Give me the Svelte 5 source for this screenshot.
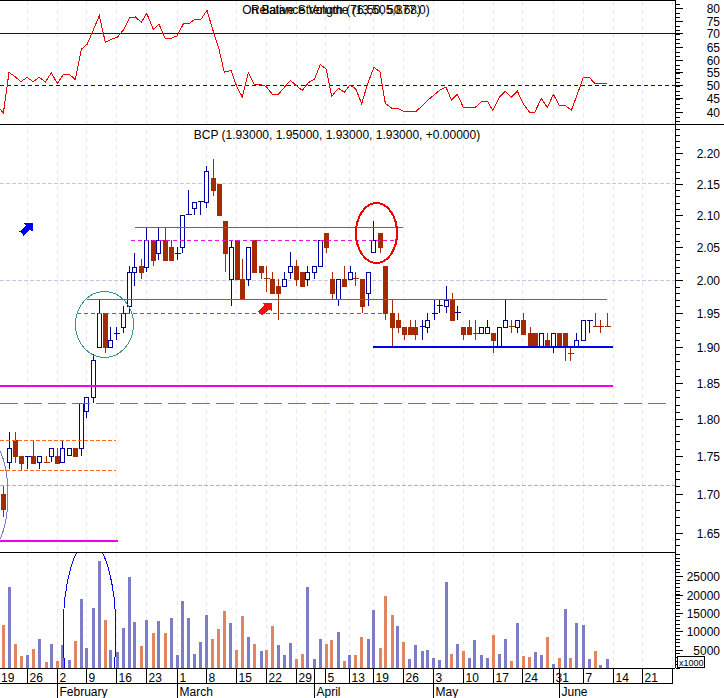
<script>
  // week starts, shared by the grid and the date row
  const weeks = [
    [27.5, '26'], [57.5, '2'], [86.5, '9'], [116.5, '16'], [146.5, '23'], [177.5, '1'], [206.5, '8'],
    [236.5, '15'], [266.5, '22'], [296.5, '29'], [325.5, '5'], [349.5, '13'], [373.5, '19'], [403.5, '26'],
    [433.5, '3'], [463.5, '10'], [493.5, '17'], [522.5, '24'], [553.5, '31'], [583.5, '7'], [613.5, '14'],
    [642.5, '21'], [672.5, '']
  ];
  const months = [[57.5, 'February'], [177.5, 'March'], [314.5, 'April'], [433.5, 'May'], [559.5, 'June']];

  const rsiRaw = [[0,326],[10,340],[27,217],[45,230],[63,245],[81,232],[99,245],[118,232],[136,246],[154,218],[172,251],[190,223],[208,223],[226,239],[244,148],[262,132],[280,90],[298,47],[316,127],[334,118],[352,112],[370,90],[388,54],[406,51],[424,67],[440,40],[460,88],[477,72],[495,115],[513,115],[531,108],[551,70],[568,70],[585,58],[603,58],[621,31],[640,95],[657,148],[673,217],[693,211],[711,262],[727,291],[745,217],[763,255],[781,253],[799,260],[817,283],[835,283],[853,262],[871,241],[889,257],[907,271],[925,248],[943,238],[961,193],[979,208],[995,289],[1015,265],[1033,277],[1049,256],[1067,266],[1085,311]];
  const rsiRaw2 = [[18,248],[36,202],[54,216],[70,310],[90,325],[108,325],[126,334],[162,334],[180,318],[198,300],[216,285],[234,270],[252,261],[268,300],[286,283],[304,322],[340,322],[360,303],[376,303],[392,331],[412,292],[430,274],[448,292],[466,273],[484,312],[504,338],[518,338],[538,295],[556,323],[574,283],[592,316],[610,316],[628,331],[646,283],[664,232],[682,232],[698,250],[734,250]];
  const rsi = rsiRaw.map(([x, y]) => `${x / 3},${y / 3}`)
    .concat(rsiRaw2.map(([x, y]) => `${362 + x / 3},${y / 3}`)).join(' ');

  // x, high, low, body top, body bottom, kind: u hollow, d solid, U/D doji
  const candles = [
    [3.5,486,517,494,509,'d'],[9.5,432,469,448,462,'u'],[15.5,432,463,440,456,'d'],[21.5,456,470,456,463,'d'],
    [27.5,456,469,456,456,'U'],[33.5,440,463,456,463,'d'],[39.5,456,469,456,462,'u'],[46.5,456,462,462,462,'D'],
    [51.5,448,462,448,456,'u'],[57.5,448,463,456,463,'d'],[62.5,440,462,448,462,'u'],[69.5,448,455,448,455,'u'],
    [75.5,448,456,448,456,'d'],[81.5,403,456,403,448,'u'],[86.5,397,418,397,411,'u'],[93.5,354,403,360,397,'u'],
    [99.5,299,347,313,347,'u'],[105.5,313,353,313,347,'d'],[110.5,327,347,340,347,'u'],[116.5,327,340,333,333,'U'],
    [123.5,306,333,313,327,'u'],[129.5,266,313,272,306,'u'],[134.5,253,286,267,272,'u'],[141.5,259,279,266,272,'d'],
    [146.5,228,272,240,267,'u'],[153.5,240,266,240,260,'d'],[158.5,228,260,240,253,'u'],[165.5,228,260,240,260,'d'],
    [171.5,240,260,247,260,'d'],[177.5,247,260,253,253,'U'],[182.5,215,253,215,247,'u'],[188.5,190,214,214,214,'U'],
    [194.5,202,215,202,208,'u'],[200.5,201,215,201,201,'U'],[206.5,166,208,171,202,'u'],[213.5,159,196,178,190,'d'],
    [219.5,184,215,184,215,'d'],[225.5,221,272,221,253,'d'],[231.5,240,306,247,279,'u'],[237.5,240,279,240,279,'d'],
    [242.5,259,299,279,299,'d'],[248.5,247,286,247,279,'u'],[254.5,240,272,240,272,'d'],[261.5,266,279,266,272,'d'],
    [266.5,266,292,278,278,'D'],[272.5,272,293,279,293,'d'],[278.5,279,320,286,293,'d'],[284.5,272,286,279,286,'u'],
    [290.5,252,279,266,272,'u'],[296.5,260,286,266,279,'d'],[302.5,272,286,272,286,'d'],[307.5,266,286,272,279,'u'],
    [314.5,266,279,266,272,'u'],[320.5,240,266,240,266,'u'],[326.5,233,253,233,247,'d'],[332.5,272,299,279,293,'d'],
    [338.5,279,306,279,299,'u'],[344.5,266,286,279,286,'d'],[350.5,266,279,272,279,'u'],[355.5,272,286,278,278,'D'],
    [362.5,279,313,279,306,'d'],[368.5,272,306,272,293,'u'],[373.5,221,252,240,252,'u'],[380.5,233,253,233,247,'d'],
    [385.5,266,320,266,313,'d'],[392.5,299,347,313,327,'d'],[398.5,313,333,320,327,'d'],[404.5,327,340,327,334,'d'],
    [410.5,320,334,327,334,'d'],[415.5,320,340,327,334,'d'],[422.5,320,340,326,326,'U'],[427.5,313,333,320,327,'u'],
    [434.5,300,320,313,313,'U'],[439.5,300,313,305,305,'U'],[446.5,286,313,300,306,'u'],[452.5,293,320,300,320,'d'],
    [457.5,306,320,312,312,'U'],[463.5,327,340,327,334,'d'],[469.5,320,334,327,334,'d'],[475.5,320,340,333,333,'D'],
    [481.5,327,333,327,333,'u'],[487.5,320,333,327,333,'u'],[493.5,333,353,333,340,'d'],[499.5,327,347,327,347,'u'],
    [505.5,300,327,320,327,'u'],[511.5,320,333,326,326,'D'],[517.5,320,333,320,327,'u'],[523.5,313,334,320,334,'d'],
    [530.5,327,347,333,347,'d'],[535.5,333,347,333,347,'d'],[541.5,333,347,333,347,'u'],[547.5,333,347,340,347,'d'],
    [553.5,333,353,333,347,'u'],[559.5,333,347,333,347,'d'],[565.5,333,361,333,347,'d'],[570.5,347,361,353,353,'D'],
    [576.5,333,347,340,347,'u'],[583.5,320,340,320,340,'u'],[589.5,320,333,320,320,'U'],[595.5,313,327,326,326,'D'],
    [600.5,320,333,326,326,'D'],[607.5,313,327,326,326,'D']
  ];

  // x, top of bar, 1 for a down day
  const volume = [
    [3.5,232,1],[9.5,118,0],[15.5,288,1],[21.5,325,1],[27.5,322,0],[33.5,303,1],[39.5,273,0],[46.5,341,1],[51.5,288,0],[57.5,340,1],
    [62.5,292,0],[69.5,335,0],[75.5,279,1],[81.5,153,0],[86.5,300,0],[93.5,180,0],[99.5,40,0],[105.5,217,1],[110.5,306,0],[117.5,313,0],
    [123.5,241,0],[129.5,87,0],[134.5,222,0],[141.5,294,1],[146.5,217,0],[153.5,255,1],[158.5,219,0],[165.5,255,1],[171.5,211,0],[177.5,320,0],
    [182.5,159,0],[188.5,210,0],[194.5,317,0],[200.5,282,0],[206.5,201,0],[212.5,273,1],[218.5,243,1],[224.5,189,1],[230.5,225,0],[236.5,306,1],
    [242.5,205,1],[248.5,267,0],[254.5,288,1],[261.5,309,0],[266.5,305,1],[272.5,235,1],[278.5,291,0],[284.5,322,0],[290.5,285,0],[296.5,332,1],
    [302.5,319,1],[307.5,118,0],[314.5,332,0],[320.5,273,0],[326.5,288,1],[331.5,276,1],[338.5,253,0],[344.5,340,1],[349.5,322,0],[355.5,322,1],
    [361.5,267,1],[368.5,273,0],[373.5,186,0],[380.5,300,1],[385.5,144,1],[392.5,200,1],[397.5,234,0],[403.5,282,1],[409.5,334,0],[415.5,291,0],
    [422.5,309,0],[427.5,306,0],[433.5,331,0],[439.5,336,0],[446.5,102,0],[451.5,319,1],[457.5,288,0],[463.5,309,1],[469.5,330,0],[474.5,277,0],
    [481.5,322,0],[487.5,331,0],[493.5,261,1],[499.5,318,0],[505.5,273,0],[511.5,339,1],[517.5,225,0],[523.5,323,1],[529.5,328,1],[535.5,312,0],
    [541.5,321,0],[547.5,267,1],[553.5,349,0],[559.5,331,1],[565.5,183,0],[570.5,330,1],[576.5,226,0],[583.5,232,0],[589.5,333,0],[595.5,310,1],
    [600.5,351,0],[607.5,334,0]
  ];

  const priceLevels = [
    [2.2,153],[2.15,184],[2.1,215],[2.05,247],[2.0,280],[1.95,313],[1.9,347],[1.85,383],[1.8,419],[1.75,456],[1.7,494],[1.65,533]
  ];
  const priceLabels = priceLevels.map(([p, y]) => [p.toFixed(2), y]);
  const priceMinor = [];
  for (let i = 0; i < priceLevels.length - 1; i++) {
    const a = priceLevels[i][1], b = priceLevels[i + 1][1];
    for (let k = 1; k < 5; k++) priceMinor.push(Math.round(a + ((b - a) * k) / 5));
  }
  for (let k = 1; k < 5; k++) priceMinor.push(153 - k * 6);
  priceMinor.push(539, 545);

  const rsiLabels = [[80,8],[75,21],[70,33],[65,47],[60,60],[55,72],[50,85],[45,98],[40,112]];
  const rsiMinor = [];
  for (let y = 4; y < 124; y += 4.33) rsiMinor.push(Math.round(y));

  const volLabels = [[25000,576],[20000,595],[15000,613],[10000,631],[5000,650]];
  const volMinor = [];
  for (let y = 668; y > 553; y -= 3.68) volMinor.push(Math.round(y));
</script>

<div class="chart">
  <svg width="724" height="698" viewBox="0 0 724 698">
    <!-- grid -->
    {#each weeks as w}
      <line class="grid-v" x1={w[0]} x2={w[0]} y1="1" y2="668" />
    {/each}
    <line class="grid-h" x1="0" x2="675" y1="183.5" y2="183.5" />
    <line class="grid-h" x1="0" x2="675" y1="280.5" y2="280.5" />
    <line class="grid-teal" x1="0" x2="675" y1="485.5" y2="485.5" />

    <!-- rsi pane -->
    <line class="rsi-ref" x1="0" x2="675" y1="33.5" y2="33.5" />
    <line class="rsi-ref dash" x1="0" x2="675" y1="85.5" y2="85.5" />
    <polyline class="rsi" points={rsi} />
    <text class="label mid" x="336" y="14">On Balance Volume (13,505,877.0)</text>
    <text class="label mid" x="336" y="14">Relative Strength (76,50, 50.68)</text>
    <text class="label mid" x="337" y="139">BCP (1.93000, 1.95000, 1.93000, 1.93000, +0.00000)</text>

    <!-- candles -->
    {#each candles as c}
      {@const color = c[5] === 'u' || c[5] === 'U' ? 'wick-up' : 'wick-down'}
      <line class={color} x1={c[0]} x2={c[0]} y1={c[1]} y2={c[2]} />
      {#if c[5] === 'u'}
        <rect class="body-up" x={c[0] - 2} y={c[3] + 0.5} width="4" height={c[4] - c[3]} />
      {:else if c[5] === 'd'}
        <rect class="body-down" x={c[0] - 2.5} y={c[3]} width="5" height={c[4] - c[3] + 1} />
      {:else}
        <line class={color} x1={c[0] - 3} x2={c[0] + 3} y1={c[3] + 0.5} y2={c[3] + 0.5} />
      {/if}
    {/each}

    <!-- drawn trend lines -->
    <line class="magenta" x1="135" x2="403" y1="227.5" y2="227.5" />
    <line class="magenta dash" x1="131" x2="397" y1="240.5" y2="240.5" />
    <line class="magenta" x1="87" x2="607" y1="299.5" y2="299.5" />
    <line class="magenta dash" x1="77" x2="385" y1="313.5" y2="313.5" />
    <line class="blue-thick" x1="373" x2="613" y1="347" y2="347" />
    <line class="magenta-thick" x1="0" x2="613" y1="386" y2="386" />
    <line class="teal-dash" x1="0" x2="666" y1="403.5" y2="403.5" />
    <line class="orange" x1="0" x2="116" y1="440.5" y2="440.5" />
    <line class="orange" x1="0" x2="116" y1="470.5" y2="470.5" />
    <line class="magenta-thick" x1="0" x2="118" y1="541" y2="541" />

    <ellipse class="ring teal" cx="104.5" cy="324.5" rx="29" ry="33" />
    <ellipse class="ring red" cx="376.5" cy="233" rx="20.5" ry="30" />
    <ellipse class="ring purple" cx="-10" cy="495" rx="18" ry="53" />

    <path class="arrow-blue" d="M19.5 231.5 L26 225.5 L24 223 L32.5 223 L32.5 231.5 L30 229.5 L23.5 235.5 Z" />
    <path class="arrow-red" d="M258 311.5 L264.5 305.5 L262.5 303 L272 303 L272 312 L269.5 309.5 L262 315.5 Z" />

    <!-- volume -->
    {#each volume as v}
      <rect class={v[2] ? 'vol-down' : 'vol-up'} x={v[0] - 1.5} y={548 + v[1] / 3} width="3" height={668 - 548 - v[1] / 3} />
    {/each}
    <clipPath id="vol-pane"><rect x="0" y="553" width="675" height="115" /></clipPath>
    <g clip-path="url(#vol-pane)">
      <ellipse class="ring blue" cx="89.5" cy="633" rx="26.5" ry="92" />
    </g>

    <!-- pane borders -->
    <line class="frame" x1="0" x2="675" y1="0.5" y2="0.5" />
    <line class="frame" x1="0" x2="724" y1="124.5" y2="124.5" />
    <line class="frame" x1="0" x2="675" y1="552.5" y2="552.5" />
    <line class="frame" x1="0" x2="675" y1="668.5" y2="668.5" />
    <line class="frame" x1="0" x2="673" y1="683.5" y2="683.5" />
    <line class="frame" x1="675.5" x2="675.5" y1="0" y2="668" />

    <!-- right axes -->
    {#each rsiMinor as y}
      <line class="frame" x1="676" x2="680" y1={y + 0.5} y2={y + 0.5} />
    {/each}
    {#each rsiLabels as l}
      <line class="frame" x1="676" x2="683" y1={l[1] + 0.5} y2={l[1] + 0.5} />
      <text class="label end" x="720" y={l[1] + 5}>{l[0]}</text>
    {/each}
    {#each priceMinor as y}
      <line class="frame" x1="676" x2="680" y1={y + 0.5} y2={y + 0.5} />
    {/each}
    {#each priceLabels as l}
      <line class="frame" x1="676" x2="683" y1={l[1] + 0.5} y2={l[1] + 0.5} />
      <text class="label end" x="720" y={l[1] + 5}>{l[0]}</text>
    {/each}
    {#each volMinor as y}
      <line class="frame" x1="676" x2="680" y1={y + 0.5} y2={y + 0.5} />
    {/each}
    {#each volLabels as l}
      <line class="frame" x1="676" x2="683" y1={l[1] + 0.5} y2={l[1] + 0.5} />
      <text class="label end" x="720" y={l[1] + 5}>{l[0]}</text>
    {/each}
    <rect class="box" x="677.5" y="656.5" width="27" height="11" />
    <text class="small" x="679" y="665.5">x1000</text>

    <!-- date row -->
    <text class="label" x="1" y="682">19</text>
    {#each weeks as w}
      <line class="frame" x1={w[0]} x2={w[0]} y1="668" y2="683" />
      <text class="label" x={w[0] + 2} y="682">{w[1]}</text>
    {/each}
    {#each months as m}
      <line class="frame" x1={m[0]} x2={m[0]} y1="668" y2="698" />
      <text class="label" x={m[0] + 2} y="696">{m[1]}</text>
    {/each}
  </svg>
</div>

<style>
  :global(body) {
    background: #fff;
  }

  .chart {
    width: 724px;
    height: 698px;
    overflow: hidden;
    background: #fff;
  }

  svg {
    display: block;
    shape-rendering: crispEdges;
  }

  .label {
    font: 12px "Liberation Sans", Arial, sans-serif;
    fill: #000;
  }

  .mid {
    text-anchor: middle;
  }

  .end {
    text-anchor: end;
  }

  .small {
    font: 9px "Liberation Sans", Arial, sans-serif;
    fill: #000;
  }

  .frame {
    stroke: #000;
    stroke-width: 1;
  }

  .box {
    fill: #fff;
    stroke: #000;
  }

  .grid-v {
    stroke: #e4e4fa;
    stroke-dasharray: 4 4;
  }

  .grid-h {
    stroke: #c8c4e4;
    stroke-dasharray: 4 2;
  }

  .grid-teal {
    stroke: #8fc0c8;
    stroke-dasharray: 4 2;
  }

  .rsi-ref {
    stroke: #0000c0;
  }

  .dash {
    stroke-dasharray: 4 3;
  }

  .rsi {
    fill: none;
    stroke: #f00000;
  }

  .wick-up {
    stroke: #00009c;
  }

  .wick-down {
    stroke: #a52a00;
  }

  .body-up {
    fill: #fff;
    stroke: #00009c;
  }

  .body-down {
    fill: #a52a00;
  }

  .magenta {
    stroke: #e810e0;
  }

  .magenta.dash {
    stroke-dasharray: 4 3;
  }

  .magenta-thick {
    stroke: #f000e8;
    stroke-width: 2;
  }

  .blue-thick {
    stroke: #0000f0;
    stroke-width: 2;
  }

  .teal-dash {
    stroke: #3f8a8a;
    stroke-dasharray: 18 6;
  }

  .orange {
    stroke: #ff6a20;
    stroke-dasharray: 4 2;
  }

  .ring {
    fill: none;
  }

  .teal {
    stroke: #3f9090;
  }

  .red {
    stroke: #f00000;
    stroke-width: 2;
  }

  .purple {
    stroke: #7f78c8;
  }

  .blue {
    stroke: #0000f0;
  }

  .arrow-blue {
    fill: #0000f0;
  }

  .arrow-red {
    fill: #f01010;
  }

  .vol-up {
    fill: #7c7cc8;
  }

  .vol-down {
    fill: #e08560;
  }
</style>
